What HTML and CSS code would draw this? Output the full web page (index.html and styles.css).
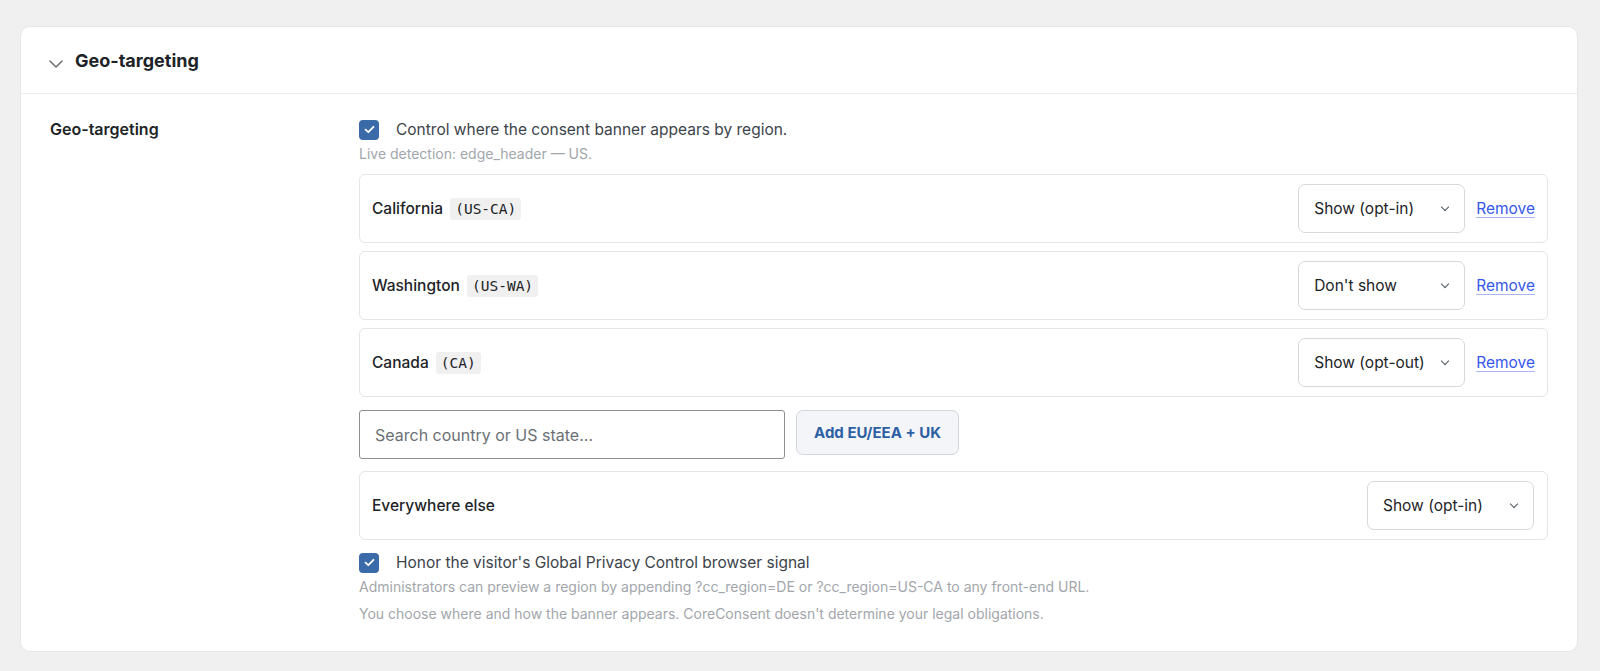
FILE: index.html
```html
<!DOCTYPE html>
<html lang="en">
<head>
    <meta charset="UTF-8">
    <meta name="viewport" content="width=device-width, initial-scale=1.0">
    <title>CoreConsent - Geo-targeting</title>
    <link rel="stylesheet" href="styles.css">
</head>
<body>
    <section class="panel">
        <header class="panel-head">
            <svg class="chev" width="16" height="10" viewBox="0 0 16 10"><path d="M2 2l6 6 6-6" fill="none" stroke="#6d7277" stroke-width="1.6" stroke-linecap="round" stroke-linejoin="round"/></svg>
            <h2>Geo-targeting</h2>
        </header>

        <div class="panel-body">
            <div class="field-label">Geo-targeting</div>

            <div class="field">
                <label class="check">
                    <span class="box"><svg width="11" height="9" viewBox="0 0 11 9"><path d="M1.5 4.6l2.8 2.6L9.5 1.8" fill="none" stroke="#fff" stroke-width="1.8" stroke-linecap="round" stroke-linejoin="round"/></svg></span>
                    Control where the consent banner appears by region.
                </label>
                <p class="hint first">Live detection: edge_header — US.</p>

                <div class="rules">
                    <div class="rule">
                        <div class="rule-name">California <code>(US-CA)</code></div>
                        <div class="select">Show (opt-in)<span class="caret"></span></div>
                        <a href="#" class="remove">Remove</a>
                    </div>
                    <div class="rule">
                        <div class="rule-name">Washington <code>(US-WA)</code></div>
                        <div class="select">Don't show<span class="caret"></span></div>
                        <a href="#" class="remove">Remove</a>
                    </div>
                    <div class="rule">
                        <div class="rule-name">Canada <code>(CA)</code></div>
                        <div class="select">Show (opt-out)<span class="caret"></span></div>
                        <a href="#" class="remove">Remove</a>
                    </div>
                </div>

                <div class="add-row">
                    <input type="text" class="search" placeholder="Search country or US state...">
                    <button class="btn">Add EU/EEA + UK</button>
                </div>

                <div class="rule fallback">
                    <div class="rule-name">Everywhere else</div>
                    <div class="select">Show (opt-in)<span class="caret"></span></div>
                </div>

                <label class="check gpc">
                    <span class="box"><svg width="11" height="9" viewBox="0 0 11 9"><path d="M1.5 4.6l2.8 2.6L9.5 1.8" fill="none" stroke="#fff" stroke-width="1.8" stroke-linecap="round" stroke-linejoin="round"/></svg></span>
                    Honor the visitor's Global Privacy Control browser signal
                </label>
                <p class="hint">Administrators can preview a region by appending ?cc_region=DE or ?cc_region=US-CA to any front-end URL.</p>
                <p class="hint last">You choose where and how the banner appears. CoreConsent doesn't determine your legal obligations.</p>
            </div>
        </div>
    </section>
</body>
</html>
```

FILE: styles.css
```css
body {
    margin: 0;
    padding: 26px 22px 20px 20px;
    background: #f0f0f1;
    color: #1d2327;
    font-family: Inter, 'Noto Sans', sans-serif;
}

.panel {
    background: #fff;
    border: 1px solid #e6e7e9;
    border-radius: 10px;
}

.panel-head {
    display: flex;
    align-items: center;
    height: 66px;
    padding-left: 27px;
    border-bottom: 1px solid #ececee;
}

.chev {
    margin-top: 8px;
    margin-right: 11px;
}

.panel-head h2 {
    margin: 0;
    font-size: 18px;
    font-weight: 700;
}

.panel-body {
    display: grid;
    grid-template-columns: 309px 1fr;
    padding: 25px 29px 29px 29px;
}

.field-label {
    font-size: 16px;
    font-weight: 600;
    line-height: 21px;
}

.check {
    display: flex;
    align-items: center;
    font-size: 15.5px;
    color: #3c434a;
    line-height: 21px;
}

.box {
    display: flex;
    align-items: center;
    justify-content: center;
    width: 20px;
    height: 20px;
    margin-right: 17px;
    border-radius: 4px;
    background: #3a6aa8;
}

.hint {
    margin: 5px 0 0;
    font-size: 14px;
    color: #a2a6ab;
    line-height: 17px;
}

.hint.last {
    margin-top: 10px;
}

.rules {
    display: flex;
    flex-direction: column;
    gap: 8px;
    margin-top: 12px;
}

.rule {
    display: flex;
    align-items: center;
    height: 67px;
    padding: 0 12px;
    border: 1px solid #e3e5e8;
    border-radius: 6px;
}

.rule-name {
    flex: 1;
    font-size: 15.5px;
    font-weight: 500;
}

code {
    margin-left: 3px;
    padding: 3px 5px;
    background: #f0f0f1;
    border-radius: 3px;
    font-family: 'DejaVu Sans Mono', monospace;
    font-size: 14.5px;
    font-weight: 400;
}

.select {
    position: relative;
    box-sizing: border-box;
    width: 167px;
    height: 49px;
    padding-left: 15px;
    display: flex;
    align-items: center;
    border: 1px solid #d6d8db;
    border-radius: 7px;
    font-size: 15.5px;
    color: #1d2327;
}

.caret {
    position: absolute;
    right: 16px;
    top: 19px;
    width: 5px;
    height: 5px;
    border-right: 1.5px solid #50575e;
    border-bottom: 1.5px solid #50575e;
    transform: rotate(45deg);
}

.remove {
    margin-left: 11px;
    font-size: 15.5px;
    color: #3858e9;
    text-decoration-color: #a9b6f2;
    text-underline-offset: 3px;
}

.add-row {
    display: flex;
    gap: 11px;
    margin-top: 13px;
}

.search {
    box-sizing: border-box;
    width: 426px;
    height: 49px;
    padding: 0 15px;
    border: 1px solid #8c8f94;
    border-radius: 3px;
    font-family: inherit;
    font-size: 16px;
}

.search::placeholder {
    color: #6b7075;
}

.btn {
    width: 163px;
    height: 45px;
    background: #f3f5f8;
    border: 1px solid #d3d7dc;
    border-radius: 7px;
    color: #2c5fa3;
    font-family: inherit;
    font-size: 15px;
    font-weight: 700;
}

.fallback {
    margin-top: 12px;
    padding-right: 13px;
}

.gpc {
    margin-top: 12px;
}
```
